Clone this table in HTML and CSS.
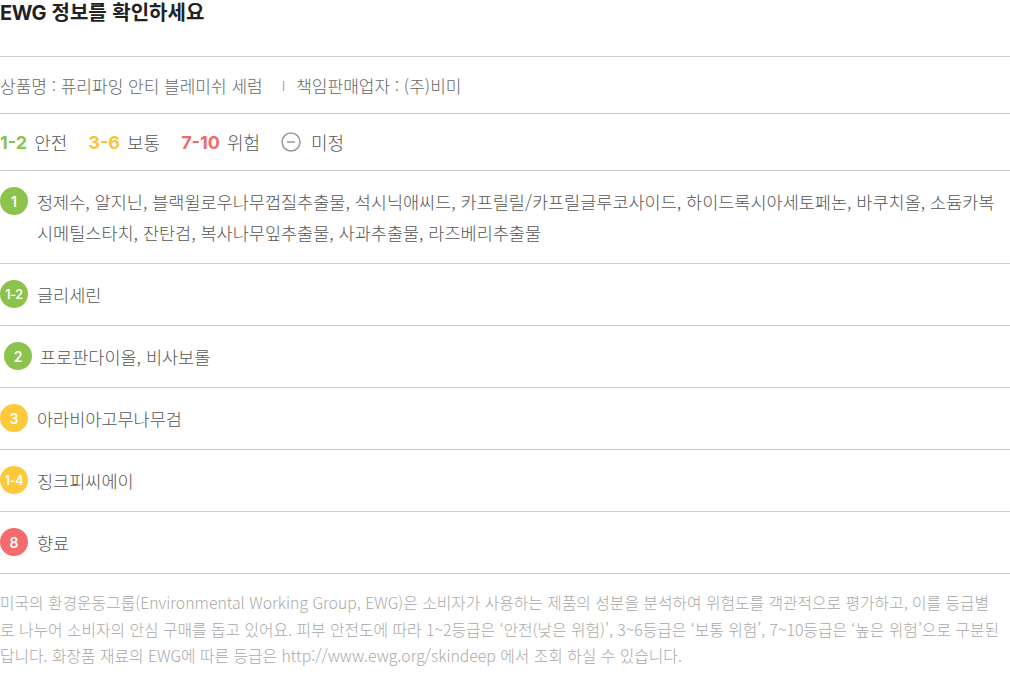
FILE: index.html
```html
<!DOCTYPE html>
<html lang="ko">
<head>
<meta charset="utf-8">
<link rel="stylesheet" href="styles.css">
</head>
<body>
<div class="page">
  <h1 class="title"><span class="latin">EWG</span> 정보를 확인하세요</h1>
  <div class="row product">
    <span>상품명 : 퓨리파잉 안티 블레미쉬 세럼</span>
    <span class="sep">I</span>
    <span>책임판매업자 : (주)비미</span>
  </div>
  <div class="row legend">
    <span class="lg"><b class="num green">1-2</b> 안전</span>
    <span class="lg"><b class="num yellow">3-6</b> 보통</span>
    <span class="lg"><b class="num red">7-10</b> 위험</span>
    <span class="lg"><svg class="minus" width="20" height="20" viewBox="0 0 20 20"><circle cx="10" cy="10" r="9" fill="none" stroke="#999" stroke-width="1.5"/><line x1="6" y1="10" x2="14" y2="10" stroke="#999" stroke-width="1.5"/></svg> 미정</span>
  </div>
  <div class="row item">
    <span class="badge green">1</span>
    <p class="names">정제수, 알지닌, 블랙윌로우나무껍질추출물, 석시닉애씨드, 카프릴릴/카프릴글루코사이드, 하이드록시아세토페논, 바쿠치올, 소듐카복시메틸스타치, 잔탄검, 복사나무잎추출물, 사과추출물, 라즈베리추출물</p>
  </div>
  <div class="row item">
    <span class="badge green small">1-2</span>
    <p class="names">글리세린</p>
  </div>
  <div class="row item">
    <span class="badge green shift">2</span>
    <p class="names">프로판다이올, 비사보롤</p>
  </div>
  <div class="row item">
    <span class="badge yellow">3</span>
    <p class="names">아라비아고무나무검</p>
  </div>
  <div class="row item">
    <span class="badge yellow small">1-4</span>
    <p class="names">징크피씨에이</p>
  </div>
  <div class="row item">
    <span class="badge red">8</span>
    <p class="names">향료</p>
  </div>
  <p class="note">미국의 환경운동그룹(Environmental Working Group, EWG)은 소비자가 사용하는 제품의 성분을 분석하여 위험도를 객관적으로 평가하고, 이를 등급별<br>로 나누어 소비자의 안심 구매를 돕고 있어요. 피부 안전도에 따라 1~2등급은 ‘안전(낮은 위험)’, 3~6등급은 ‘보통 위험’, 7~10등급은 ‘높은 위험’으로 구분된<br>답니다. 화장품 재료의 EWG에 따른 등급은 http://www.ewg.org/skindeep 에서 조회 하실 수 있습니다.</p>
</div>
</body>
</html>
```
FILE: styles.css
```css
html, body {
  margin: 0;
  padding: 0;
  background: #fff;
}
body {
  font-family: "Noto Sans CJK KR", "Noto Sans", sans-serif;
  color: #666;
}
.page {
  width: 1010px;
}
.title {
  margin: 0;
  height: 56px;
  font-size: 20px;
  line-height: 24px;
  font-weight: 700;
  color: #222;
  border-bottom: 1px solid #ccc;
}
.title .latin {
  font-family: Inter, "Noto Sans CJK KR", sans-serif;
  letter-spacing: -0.5px;
}
.row {
  border-bottom: 1px solid #ccc;
  display: flex;
  align-items: center;
}
.product {
  height: 56px;
  font-size: 17px;
  font-weight: 300;
  color: #666;
}
.product .sep {
  margin: 0 11px 0 19px;
  font-size: 13px;
  color: #888;
}
.legend {
  height: 56px;
  font-size: 18px;
  font-weight: 300;
  color: #555;
  gap: 21px;
}
.lg {
  display: flex;
  align-items: center;
  gap: 7px;
}
.num {
  font-family: Inter, "Noto Sans CJK KR", sans-serif;
  font-weight: 700;
  font-size: 18px;
}
.num.green { color: #8cc34c; }
.num.yellow { color: #f8c53a; }
.num.red { color: #ef6b6b; }
.minus {
  display: block;
  margin-right: 3px;
}
.item {
  align-items: flex-start;
  padding: 15px 0;
  gap: 9px;
}
.badge {
  flex: none;
  width: 28px;
  height: 28px;
  border-radius: 50%;
  color: #fff;
  font-family: Inter, "Noto Sans CJK KR", sans-serif;
  font-weight: 600;
  font-size: 14px;
  display: flex;
  align-items: center;
  justify-content: center;
  margin-top: 1px;
}
.badge.small {
  font-size: 12.5px;
  letter-spacing: -0.3px;
}
.badge.shift {
  margin-left: 4px;
  margin-right: -1px;
}
.badge.green { background: #8cc34c; }
.badge.yellow { background: #fbc93a; }
.badge.red { background: #f46b6d; }
.names {
  margin: 0;
  font-size: 17.5px;
  font-weight: 300;
  line-height: 31px;
  color: #555;
}
.note {
  margin: 0;
  padding-top: 16px;
  font-size: 15.8px;
  font-weight: 300;
  line-height: 26.5px;
  color: #a8a8a8;
}
```
